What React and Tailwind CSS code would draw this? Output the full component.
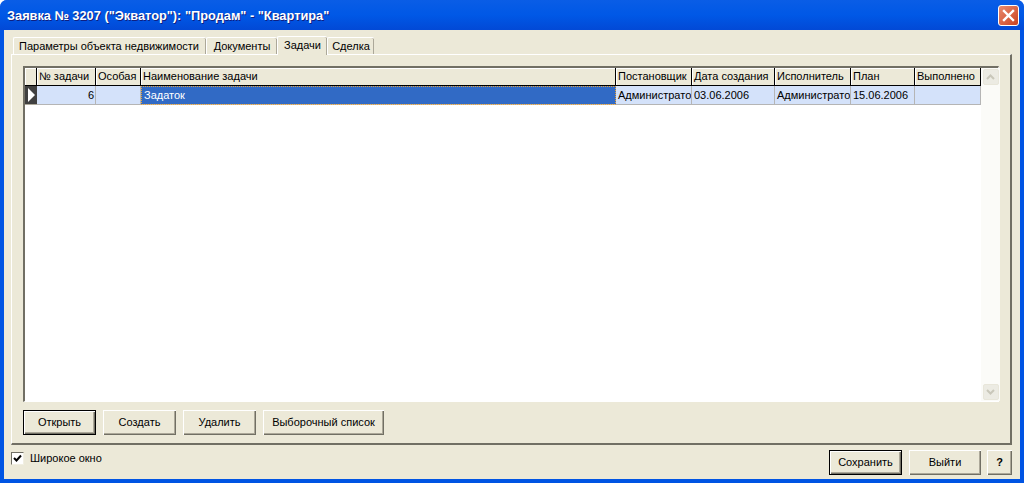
const columns = [
  { label: '№ задачи', width: 'w-[59px]', value: '6', align: 'text-right pr-[1px]' },
  { label: 'Особая', width: 'w-[45px]', value: '' },
  { label: 'Наименование задачи', width: 'w-[475px]', value: 'Задаток', selected: true },
  { label: 'Постановщик', width: 'w-[76px]', value: 'Администратор' },
  { label: 'Дата создания', width: 'w-[83px]', value: '03.06.2006' },
  { label: 'Исполнитель', width: 'w-[76px]', value: 'Администратор' },
  { label: 'План', width: 'w-[64px]', value: '15.06.2006' },
  { label: 'Выполнено', width: 'w-[66px]', value: '' },
];

const tabs = [
  { label: 'Параметры объекта недвижимости', width: 'w-[193px] pr-[2px]' },
  { label: 'Документы', width: 'w-[71px]' },
  { label: 'Задачи', width: 'w-[50px]', active: true },
  { label: 'Сделка', width: 'w-[47px]' },
];

function Button({ children, width, primary, bold }) {
  return (
    <button
      className={`${width} h-[25px] shrink-0 flex items-center justify-center bg-[#ece9d8] text-black ${
        primary
          ? 'border border-black shadow-[inset_1px_1px_0_#fff,inset_-1px_-1px_0_#716f64,inset_-2px_-2px_0_#aca899]'
          : 'shadow-[inset_1px_1px_0_#fff,inset_-1px_-1px_0_#716f64,inset_-2px_-2px_0_#aca899]'
      } ${bold ? 'font-bold' : ''}`}
    >
      {children}
    </button>
  );
}

function ScrollArrow({ down }) {
  return (
    <div className="w-[16px] h-[16px] rounded-[2px] border border-[#e8e6da] bg-[#ecebe3] flex items-center justify-center">
      <svg width="9" height="6" viewBox="0 0 9 6">
        <path d={down ? 'M1 1l3.5 3.5L8 1' : 'M1 5l3.5-3.5L8 5'} fill="none" stroke="#c9c7ba" strokeWidth="2" />
      </svg>
    </div>
  );
}

export default function App() {
  return (
    <div className="w-[1024px] h-[483px] flex flex-col overflow-hidden rounded-t-[7px] bg-[#0054e3] font-['Liberation_Sans',sans-serif] text-[11px] leading-none text-black">
      {/* title bar */}
      <div className="h-[30px] shrink-0 flex items-center justify-between pl-[7px] pr-[5px] bg-gradient-to-b from-[#0a5de6] via-[#0058e6] to-[#0249d6]">
        <span className="mt-[2px] text-white font-bold text-[12.8px] [text-shadow:1px_1px_0_#0f1f80]">
          Заявка № 3207 ("Экватор"): "Продам" - "Квартира"
        </span>
        <div className="w-[21px] h-[21px] rounded-[3px] border border-white bg-gradient-to-br from-[#e98a6d] to-[#c9401c] flex items-center justify-center">
          <svg width="13" height="13" viewBox="0 0 13 13">
            <path d="M2 2l9 9M11 2l-9 9" stroke="#fff" strokeWidth="2.4" strokeLinecap="square" />
          </svg>
        </div>
      </div>

      {/* window body */}
      <div className="flex-1 min-h-0 mx-[4px] mb-[4px] bg-[#ece9d8] pl-[7px] pr-[8px] flex flex-col">
        {/* tabs */}
        <div className="h-[24px] shrink-0 flex items-end pl-[2px]">
          {tabs.map((tab) => (
            <div
              key={tab.label}
              className={`${tab.width} flex items-center justify-center rounded-t-[2px] border-t border-l border-white shadow-[inset_-1px_0_0_#aca899] bg-[#ece9d8] ${
                tab.active ? 'h-[19px] relative z-10 -mb-px pb-[2px]' : 'h-[17px]'
              }`}
            >
              {tab.label}
            </div>
          ))}
        </div>

        {/* tab panel */}
        <div className="h-[391px] shrink-0 border-t border-l border-white border-r-2 border-r-[#716f64] border-b-2 border-b-[#716f64] pl-[11px] pr-[11px] pt-[11px] flex flex-col">
          {/* grid */}
          <div className="h-[336px] shrink-0 border-t-2 border-l-2 border-[#716f64] border-b border-r border-b-white border-r-white bg-white flex">
            <div className="w-[956px] shrink-0 flex flex-col">
              <div className="h-[18px] flex bg-[#ece9d8]">
                <div className="w-[12px] shrink-0 border-r border-b border-black shadow-[inset_1px_1px_0_#fff]" />
                {columns.map((col) => (
                  <div
                    key={col.label}
                    className={`${col.width} shrink-0 flex items-center pl-[2px] overflow-hidden whitespace-nowrap border-r border-b border-black shadow-[inset_1px_1px_0_#fff]`}
                  >
                    {col.label}
                  </div>
                ))}
              </div>
              <div className="h-[19px] flex">
                <div className="w-[12px] shrink-0 bg-[#404040] flex items-center justify-center border-b border-[#aca899]">
                  <svg width="8" height="14" viewBox="0 0 8 14">
                    <path d="M1 0l7 7-7 7z" fill="#fff" />
                  </svg>
                </div>
                {columns.map((col) => (
                  <div
                    key={col.label}
                    className={`${col.width} shrink-0 flex items-center overflow-hidden whitespace-nowrap border-b border-[#b5b5b5] ${
                      col.selected
                        ? 'bg-[#316ac5] text-white pl-[3px] outline-1 -outline-offset-1 outline-dotted outline-[#e8a33a]'
                        : 'bg-[#d4e2fa] border-r pl-[2px]'
                    } ${col.align || ''} ${col.align ? 'justify-end' : ''}`}
                  >
                    {col.value}
                  </div>
                ))}
              </div>
            </div>
            {/* scrollbar */}
            <div className="w-[19px] shrink-0 bg-[#fbfbf8] flex flex-col justify-between items-center py-[1px]">
              <ScrollArrow />
              <ScrollArrow down />
            </div>
          </div>

          {/* panel buttons */}
          <div className="mt-[8px] flex gap-[7px]">
            <Button width="w-[73px]" primary>Открыть</Button>
            <Button width="w-[73px]">Создать</Button>
            <Button width="w-[73px]">Удалить</Button>
            <Button width="w-[121px]">Выборочный список</Button>
          </div>
        </div>

        {/* footer */}
        <div className="flex-1 flex items-start justify-between">
          <label className="mt-[7px] flex items-center gap-[6px]">
            <span className="w-[13px] h-[13px] bg-white border-t border-l border-[#716f64] border-r border-b border-r-[#f1efe2] border-b-[#f1efe2] flex items-center justify-center">
              <svg width="9" height="9" viewBox="0 0 9 9">
                <path d="M1 4l2.5 2.5L8 1.5" fill="none" stroke="#000" strokeWidth="2" />
              </svg>
            </span>
            Широкое окно
          </label>
          <div className="mt-[5px] flex">
            <Button width="w-[73px] mr-[7px]" primary>Сохранить</Button>
            <Button width="w-[72px] mr-[6px]">Выйти</Button>
            <Button width="w-[25px]" bold>?</Button>
          </div>
        </div>
      </div>
    </div>
  );
}
